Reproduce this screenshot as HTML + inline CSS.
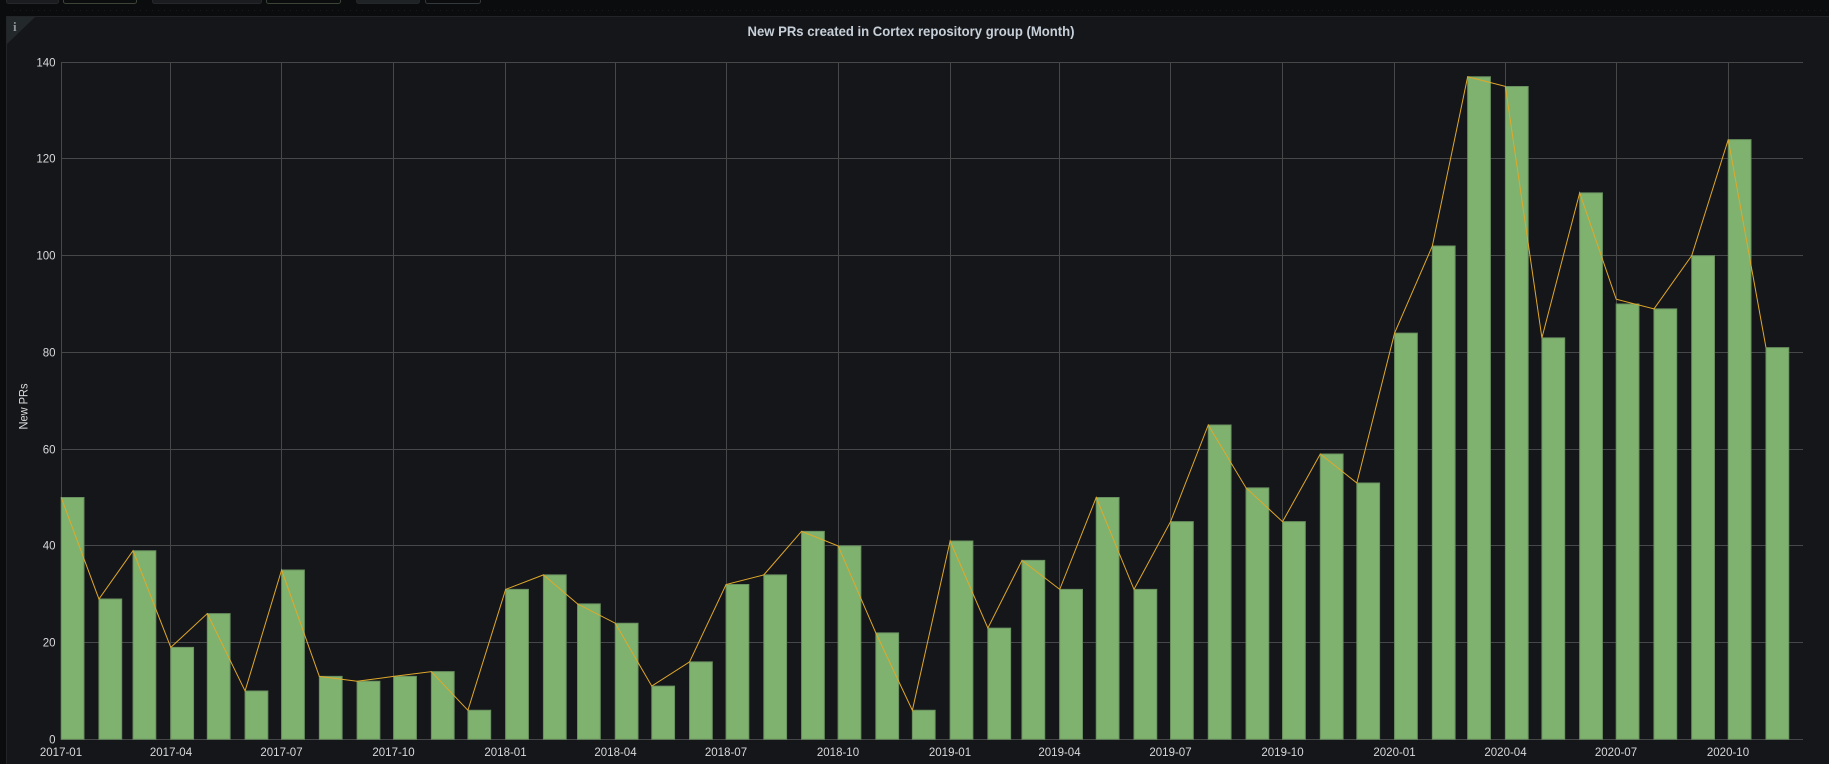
<!DOCTYPE html>
<html lang="en">
<head>
<meta charset="utf-8">
<title>New PRs created in Cortex repository group (Month)</title>
<style>
html,body{margin:0;padding:0;width:1829px;height:764px;overflow:hidden;background:#0b0c0e}
svg{display:block;position:absolute;left:0;top:0}
text{font-family:"Liberation Sans",sans-serif}
.l{font-size:11.5px;fill:#d8d9da}
.grid line{stroke:#464749;stroke-width:1}
.ns{vector-effect:non-scaling-stroke}
</style>
</head>
<body>
<svg width="1829" height="764" viewBox="0 0 1829 764" xmlns="http://www.w3.org/2000/svg">
<rect width="1829" height="764" fill="#0b0c0e"/>
<rect x="6.5" y="-6" width="52" height="9.5" rx="2" fill="#1a1c1f" stroke="#25272b"/>
<rect x="63.5" y="-6" width="73" height="9.5" rx="2" fill="#0b0c0e" stroke="#3c4438"/>
<rect x="152.5" y="-6" width="109" height="9.5" rx="2" fill="#1a1c1f" stroke="#25272b"/>
<rect x="266.5" y="-6" width="74" height="9.5" rx="2" fill="#0b0c0e" stroke="#3c4438"/>
<rect x="356.5" y="-6" width="63" height="9.5" rx="2" fill="#1f2326" stroke="#23272a"/>
<rect x="425.5" y="-6" width="55" height="9.5" rx="2" fill="#0b0c0e" stroke="#34383a"/>
<line x1="14" y1="10.5" x2="1829" y2="10.5" stroke="#191b1e" stroke-dasharray="1 5"/>
<rect x="6.5" y="16.5" width="1823" height="750" fill="#15161a" stroke="#222427"/>
<polygon points="7,17 35,17 7,44" fill="#23282b"/>
<text x="14.8" y="31" font-size="13" font-weight="700" text-anchor="middle" style="font-family:'Liberation Serif',serif" fill="#8e9499">i</text>
<text x="911" y="36" font-size="14" font-weight="700" text-anchor="middle" textLength="327" lengthAdjust="spacingAndGlyphs" fill="#c7d0d9">New PRs created in Cortex repository group (Month)</text>
<g class="grid">
<line x1="61" y1="62.5" x2="1803" y2="62.5"/>
<line x1="61" y1="158.5" x2="1803" y2="158.5"/>
<line x1="61" y1="255.5" x2="1803" y2="255.5"/>
<line x1="61" y1="352.5" x2="1803" y2="352.5"/>
<line x1="61" y1="449.5" x2="1803" y2="449.5"/>
<line x1="61" y1="545.5" x2="1803" y2="545.5"/>
<line x1="61" y1="642.5" x2="1803" y2="642.5"/>
<line x1="61" y1="739.5" x2="1803" y2="739.5"/>
<line x1="61.5" y1="62" x2="61.5" y2="740"/>
<line x1="170.5" y1="62" x2="170.5" y2="740"/>
<line x1="281.5" y1="62" x2="281.5" y2="740"/>
<line x1="393.5" y1="62" x2="393.5" y2="740"/>
<line x1="505.5" y1="62" x2="505.5" y2="740"/>
<line x1="615.5" y1="62" x2="615.5" y2="740"/>
<line x1="726.5" y1="62" x2="726.5" y2="740"/>
<line x1="838.5" y1="62" x2="838.5" y2="740"/>
<line x1="950.5" y1="62" x2="950.5" y2="740"/>
<line x1="1059.5" y1="62" x2="1059.5" y2="740"/>
<line x1="1170.5" y1="62" x2="1170.5" y2="740"/>
<line x1="1282.5" y1="62" x2="1282.5" y2="740"/>
<line x1="1394.5" y1="62" x2="1394.5" y2="740"/>
<line x1="1505.5" y1="62" x2="1505.5" y2="740"/>
<line x1="1616.5" y1="62" x2="1616.5" y2="740"/>
<line x1="1728.5" y1="62" x2="1728.5" y2="740"/>
</g>
<g class="l" text-anchor="end">
<text x="55.5" y="66.5">140</text>
<text x="55.5" y="162.5">120</text>
<text x="55.5" y="259.5">100</text>
<text x="55.5" y="356.5">80</text>
<text x="55.5" y="453.5">60</text>
<text x="55.5" y="549.5">40</text>
<text x="55.5" y="646.5">20</text>
<text x="55.5" y="743.5">0</text>
</g>
<text class="l" transform="translate(27.5 406.5) rotate(-90)" text-anchor="middle" textLength="46" lengthAdjust="spacingAndGlyphs">New PRs</text>
<g class="l" text-anchor="middle">
<text x="61" y="756">2017-01</text>
<text x="171" y="756">2017-04</text>
<text x="281.5" y="756">2017-07</text>
<text x="393.5" y="756">2017-10</text>
<text x="505.5" y="756">2018-01</text>
<text x="615.5" y="756">2018-04</text>
<text x="726" y="756">2018-07</text>
<text x="838" y="756">2018-10</text>
<text x="950" y="756">2019-01</text>
<text x="1059.5" y="756">2019-04</text>
<text x="1170.5" y="756">2019-07</text>
<text x="1282.5" y="756">2019-10</text>
<text x="1394.5" y="756">2020-01</text>
<text x="1505.5" y="756">2020-04</text>
<text x="1616" y="756">2020-07</text>
<text x="1728" y="756">2020-10</text>
</g>
<g transform="translate(61.2 739.3) scale(1.2177 -4.836)">
<g fill="#7fb26e" stroke="#6a9160" stroke-width="1">
<rect class="ns" x="0" y="0" width="18.7" height="50"/>
<rect class="ns" x="31" y="0" width="18.7" height="29"/>
<rect class="ns" x="59" y="0" width="18.7" height="39"/>
<rect class="ns" x="90" y="0" width="18.7" height="19"/>
<rect class="ns" x="120" y="0" width="18.7" height="26"/>
<rect class="ns" x="151" y="0" width="18.7" height="10"/>
<rect class="ns" x="181" y="0" width="18.7" height="35"/>
<rect class="ns" x="212" y="0" width="18.7" height="13"/>
<rect class="ns" x="243" y="0" width="18.7" height="12"/>
<rect class="ns" x="273" y="0" width="18.7" height="13"/>
<rect class="ns" x="304" y="0" width="18.7" height="14"/>
<rect class="ns" x="334" y="0" width="18.7" height="6"/>
<rect class="ns" x="365" y="0" width="18.7" height="31"/>
<rect class="ns" x="396" y="0" width="18.7" height="34"/>
<rect class="ns" x="424" y="0" width="18.7" height="28"/>
<rect class="ns" x="455" y="0" width="18.7" height="24"/>
<rect class="ns" x="485" y="0" width="18.7" height="11"/>
<rect class="ns" x="516" y="0" width="18.7" height="16"/>
<rect class="ns" x="546" y="0" width="18.7" height="32"/>
<rect class="ns" x="577" y="0" width="18.7" height="34"/>
<rect class="ns" x="608" y="0" width="18.7" height="43"/>
<rect class="ns" x="638" y="0" width="18.7" height="40"/>
<rect class="ns" x="669" y="0" width="18.7" height="22"/>
<rect class="ns" x="699" y="0" width="18.7" height="6"/>
<rect class="ns" x="730" y="0" width="18.7" height="41"/>
<rect class="ns" x="761" y="0" width="18.7" height="23"/>
<rect class="ns" x="789" y="0" width="18.7" height="37"/>
<rect class="ns" x="820" y="0" width="18.7" height="31"/>
<rect class="ns" x="850" y="0" width="18.7" height="50"/>
<rect class="ns" x="881" y="0" width="18.7" height="31"/>
<rect class="ns" x="911" y="0" width="18.7" height="45"/>
<rect class="ns" x="942" y="0" width="18.7" height="65"/>
<rect class="ns" x="973" y="0" width="18.7" height="52"/>
<rect class="ns" x="1003" y="0" width="18.7" height="45"/>
<rect class="ns" x="1034" y="0" width="18.7" height="59"/>
<rect class="ns" x="1064" y="0" width="18.7" height="53"/>
<rect class="ns" x="1095" y="0" width="18.7" height="84"/>
<rect class="ns" x="1126" y="0" width="18.7" height="102"/>
<rect class="ns" x="1155" y="0" width="18.7" height="137"/>
<rect class="ns" x="1186" y="0" width="18.7" height="135"/>
<rect class="ns" x="1216" y="0" width="18.7" height="83"/>
<rect class="ns" x="1247" y="0" width="18.7" height="113"/>
<rect class="ns" x="1277" y="0" width="18.7" height="90"/>
<rect class="ns" x="1308" y="0" width="18.7" height="89"/>
<rect class="ns" x="1339" y="0" width="18.7" height="100"/>
<rect class="ns" x="1369" y="0" width="18.7" height="124"/>
<rect class="ns" x="1400" y="0" width="18.7" height="81"/>
</g>
<polyline class="ns" fill="none" stroke="#e0a82a" stroke-width="1" stroke-linejoin="miter" points="0,50 31,29 59,39 90,19 120,26 151,10 181,35 212,13 243,12 273,13 304,14 334,6 365,31 396,34 424,28 455,24 485,11 516,16 546,32 577,34 608,43 638,40 669,22 699,6 730,41 761,23 789,37 820,31 850,50 881,31 911,45 942,65 973,52 1003,45 1034,59 1064,53 1095,84 1126,102 1155,137 1186,135 1216,83 1247,113 1277,91 1308,89 1339,100 1369,124 1400,81"/>
</g>
</svg>
</body>
</html>
